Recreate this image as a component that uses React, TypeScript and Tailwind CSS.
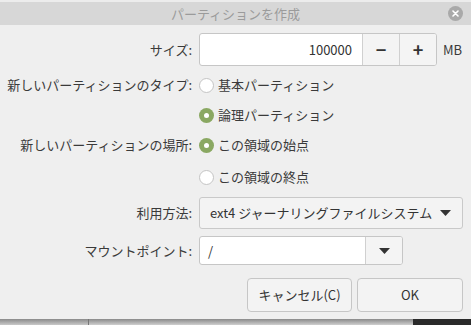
const font = { fontFamily: '"Noto Sans CJK JP", "Noto Sans", sans-serif' };

function Radio({ checked, label }: { checked?: boolean; label: string }) {
  return (
    <div className="flex items-center gap-[4px]">
      {checked ? (
        <span className="flex h-[15px] w-[15px] items-center justify-center rounded-full bg-[#8aa862]">
          <span className="h-[5px] w-[5px] rounded-full bg-white" />
        </span>
      ) : (
        <span className="h-[15px] w-[15px] rounded-full border border-[#c4c4c4] bg-white" />
      )}
      <span>{label}</span>
    </div>
  );
}

function Caret() {
  return (
    <svg width="11" height="6" viewBox="0 0 11 6">
      <path d="M0 0h11L5.5 6z" fill="#333" />
    </svg>
  );
}

function Row({ label, h, children }: { label?: string; h: string; children: React.ReactNode }) {
  return (
    <div className={`flex items-center ${h}`}>
      <div className="w-[193px] pr-[1px] text-right">{label}</div>
      <div className="ml-[6px] flex items-center">{children}</div>
    </div>
  );
}

export default function App() {
  return (
    <div className="flex h-[325px] w-[471px] flex-col overflow-hidden bg-[#efefef] text-[13px] text-[#3a3a3a]" style={font}>
      <div className="h-[2px] bg-[#ececec]" />
      {/* Title bar */}
      <div className="relative flex h-[23px] items-center justify-center bg-[#d7d7d7] pt-[1px] text-[13px] text-[#9b9b9b]">
        パーティションを作成
        <span className="absolute right-[8px] top-[4px] flex h-[15px] w-[15px] items-center justify-center rounded-full bg-[#a9a9a9]">
          <svg width="7" height="7" viewBox="0 0 7 7">
            <path d="M1 1l5 5M6 1L1 6" stroke="#fff" strokeWidth="1.6" strokeLinecap="round" />
          </svg>
        </span>
      </div>

      {/* Body */}
      <div className="flex flex-1 flex-col pt-[8px]">
        <Row label="サイズ:" h="h-[33px]">
          <div className="flex h-[33px] w-[238px] overflow-hidden rounded-[3px] border border-[#c6c6c6] bg-white">
            <div className="flex flex-1 items-center justify-end pr-[10px] text-[#333]">100000</div>
            <div className="flex w-[37px] items-center justify-center border-l border-[#d0d0d0] bg-[#f4f4f4] text-[18px] font-semibold text-[#333]">−</div>
            <div className="flex w-[37px] items-center justify-center border-l border-[#d0d0d0] bg-[#f4f4f4] text-[18px] font-semibold text-[#333]">+</div>
          </div>
          <span className="ml-[6px]">MB</span>
        </Row>
        <div className="h-[6px]" />
        <Row label="新しいパーティションのタイプ:" h="h-[26px]">
          <Radio label="基本パーティション" />
        </Row>
        <div className="h-[4px]" />
        <Row h="h-[26px]">
          <Radio checked label="論理パーティション" />
        </Row>
        <div className="h-[4px]" />
        <Row label="新しいパーティションの場所:" h="h-[26px]">
          <Radio checked label="この領域の始点" />
        </Row>
        <div className="h-[6px]" />
        <Row h="h-[26px]">
          <Radio label="この領域の終点" />
        </Row>
        <div className="h-[7px]" />
        <Row label="利用方法:" h="h-[32px]">
          <div className="flex h-[32px] w-[264px] items-center justify-between rounded-[3px] border border-[#c9c9c9] bg-[#f3f3f3] pl-[10px] pr-[11px] text-[#333]">
            <span>ext4 ジャーナリングファイルシステム</span>
            <Caret />
          </div>
        </Row>
        <div className="h-[7px]" />
        <Row label="マウントポイント:" h="h-[29px]">
          <div className="flex h-[29px] w-[204px] overflow-hidden rounded-[3px] border border-[#c6c6c6] bg-white">
            <div className="flex flex-1 items-center pl-[8px] text-[#333]">/</div>
            <div className="flex w-[37px] items-center justify-center border-l border-[#d0d0d0] bg-[#f4f4f4]">
              <Caret />
            </div>
          </div>
        </Row>
        <div className="mt-[13px] flex justify-end gap-[5px] pr-[8px]">
          <button className="h-[34px] w-[105px] rounded-[4px] border border-[#c6c6c6] bg-[#f3f3f3] text-[#333]">キャンセル(C)</button>
          <button className="h-[34px] w-[106px] rounded-[4px] border border-[#c6c6c6] bg-[#f3f3f3] text-[#333]">OK</button>
        </div>
      </div>

      {/* Shadow strip */}
      <div className="flex h-[6px]">
        <div className="w-[88px] bg-gradient-to-b from-[#8a8a8a] to-[#c9c9c9]" />
        <div className="w-[1px] bg-[#777]" />
        <div className="w-[324px] bg-gradient-to-b from-[#8a8a8a] to-[#cfcfcf]" />
        <div className="flex-1 bg-[#2a2a2a]" />
      </div>
    </div>
  );
}
